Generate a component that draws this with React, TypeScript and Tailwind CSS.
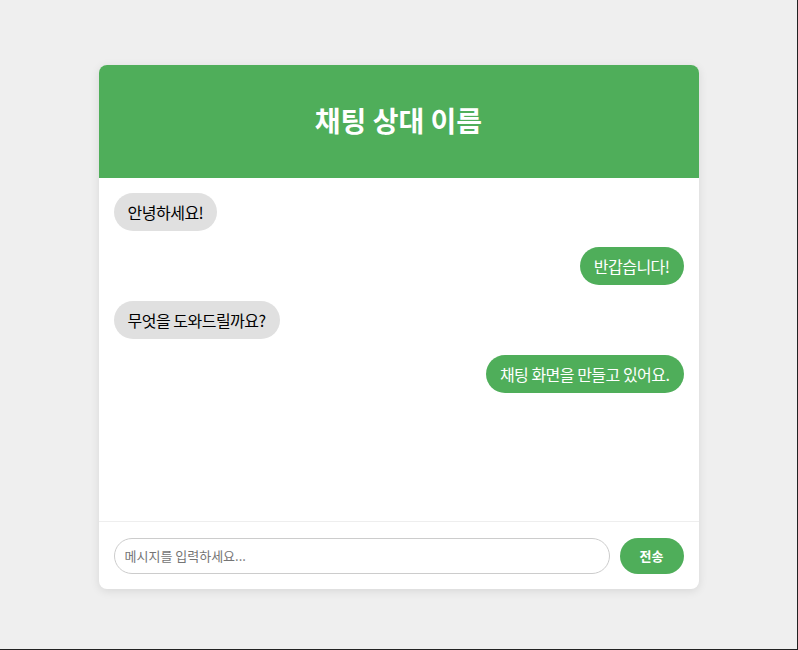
import React from "react";

const messages = [
  { text: "안녕하세요!", me: false },
  { text: "반갑습니다!", me: true },
  { text: "무엇을 도와드릴까요?", me: false },
  { text: "채팅 화면을 만들고 있어요.", me: true },
];

export default function App() {
  return (
    <div
      className="w-full h-[650px] bg-[#efefef] border-r border-b border-[#222] flex justify-center"
      style={{ fontFamily: '"Noto Sans CJK KR", "Noto Sans", sans-serif' }}
    >
      <div className="mt-[65px] w-[600px] h-[524px] bg-white rounded-lg shadow-[0_2px_10px_rgba(0,0,0,0.1)] flex flex-col overflow-hidden">
        <div className="h-[113px] bg-[#4fae5a] flex items-center justify-center shrink-0">
          <h1 className="text-white text-[28px] font-bold leading-none -mt-[3px]">채팅 상대 이름</h1>
        </div>
        <div className="flex-1 p-[15px] flex flex-col gap-4">
          {messages.map((m, i) => (
            <div key={i} className={m.me ? "flex justify-end" : "flex justify-start"}>
              <div
                className={
                  "h-[38px] px-[14px] rounded-[19px] flex items-center text-[16px] tracking-[-0.5px] " +
                  (m.me ? "bg-[#4fae5a] text-white" : "bg-[#e0e0e0] text-black")
                }
              >
                {m.text}
              </div>
            </div>
          ))}
        </div>
        <div className="h-[68px] border-t border-[#eeeeee] flex items-center px-[15px] gap-[10px] shrink-0">
          <input
            className="flex-1 h-[36px] rounded-[18px] border border-[#cccccc] px-[10px] text-[13px] outline-none placeholder:text-[#757575]"
            placeholder="메시지를 입력하세요..."
          />
          <button className="w-[64px] h-[36px] rounded-[18px] bg-[#4fae5a] text-white text-[13px] font-bold">
            전송
          </button>
        </div>
      </div>
    </div>
  );
}
